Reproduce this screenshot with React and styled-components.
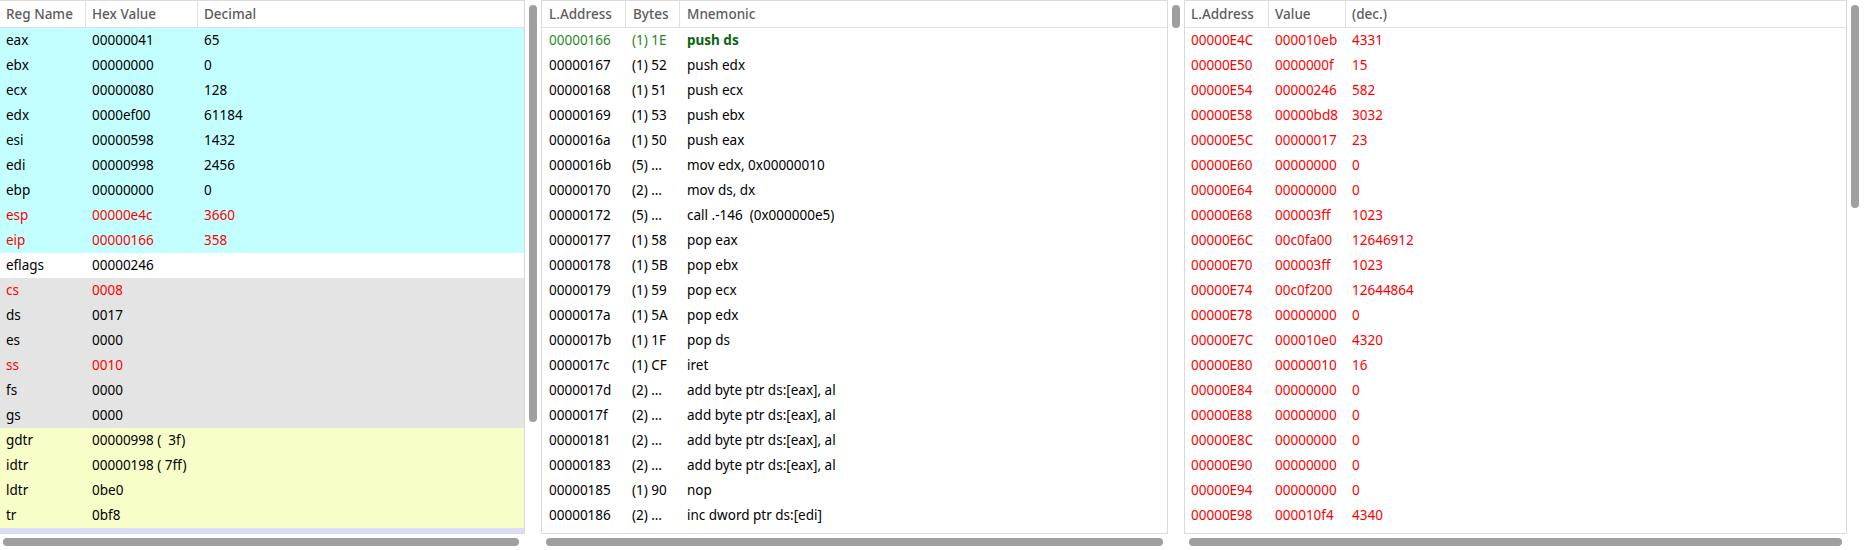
import React from "react";
import styled, { createGlobalStyle } from "styled-components";

const GlobalStyle = createGlobalStyle`
  html, body {
    margin: 0;
    padding: 0;
    background: #ffffff;
    overflow: hidden;
  }
  body {
    font-family: "Noto Sans", "Open Sans", "DejaVu Sans", sans-serif;
    font-size: 13.5px;
    color: #000;
  }
`;

const Layout = styled.div`
  display: flex;
  width: 1865px;
  height: 550px;
`;

const Pane = styled.div`
  display: flex;
  flex-direction: column;
  width: ${props => props.$width}px;
  flex-shrink: 0;
`;

const PaneBody = styled.div`
  display: flex;
  height: 534px;
`;

const Frame = styled.div`
  flex: 1;
  min-width: 0;
  box-sizing: border-box;
  border: 1px solid #dadada;
  border-left: ${props => (props.$first ? "none" : "1px solid #dadada")};
  background: #fff;
  overflow: hidden;
`;

const VGutter = styled.div`
  width: 16px;
  flex-shrink: 0;
  box-sizing: border-box;
  padding: 5px 4px 0;
`;

const VThumb = styled.div`
  width: 8px;
  height: ${props => props.$length}px;
  border-radius: 4px;
  background: #9f9f9f;
`;

const HGutter = styled.div`
  height: 16px;
  box-sizing: border-box;
  padding: 4px ${props => 16 + props.$right}px 0 ${props => props.$left}px;
`;

const HThumb = styled.div`
  height: 8px;
  border-radius: 4px;
  background: #9f9f9f;
`;

const HeaderRow = styled.div`
  display: grid;
  grid-template-columns: ${props => props.$cols};
  height: 26px;
  border-bottom: 1px solid #e0e0e0;
`;

const HeaderCell = styled.div`
  box-sizing: border-box;
  padding-left: ${props => props.$pad}px;
  line-height: 26px;
  color: #5c5c5c;
  font-weight: 500;
  white-space: nowrap;
  border-right: 1px solid #e0e0e0;
  &:last-child {
    border-right: none;
  }
`;

const Row = styled.div`
  display: grid;
  grid-template-columns: ${props => props.$cols};
  height: 25px;
  background: ${props => props.$bg || "transparent"};
  color: ${props => props.$color || "#000"};
`;

const Cell = styled.div`
  box-sizing: border-box;
  padding-left: ${props => props.$pad}px;
  line-height: 25px;
  white-space: pre;
  overflow: hidden;
  font-weight: ${props => (props.$bold ? 700 : 400)};
  color: ${props => props.$color || "inherit"};
`;

const CYAN = "#c4ffff";
const GRAY = "#e4e4e4";
const YELLOW = "#f7fec8";
const LAVENDER = "#dcdcf7";
const RED = "#ff0000";

const registers = [
  ["eax", "00000041", "65", CYAN],
  ["ebx", "00000000", "0", CYAN],
  ["ecx", "00000080", "128", CYAN],
  ["edx", "0000ef00", "61184", CYAN],
  ["esi", "00000598", "1432", CYAN],
  ["edi", "00000998", "2456", CYAN],
  ["ebp", "00000000", "0", CYAN],
  ["esp", "00000e4c", "3660", CYAN, RED],
  ["eip", "00000166", "358", CYAN, RED],
  ["eflags", "00000246", "", "#ffffff"],
  ["cs", "0008", "", GRAY, RED],
  ["ds", "0017", "", GRAY],
  ["es", "0000", "", GRAY],
  ["ss", "0010", "", GRAY, RED],
  ["fs", "0000", "", GRAY],
  ["gs", "0000", "", GRAY],
  ["gdtr", "00000998 (  3f)", "", YELLOW],
  ["idtr", "00000198 ( 7ff)", "", YELLOW],
  ["ldtr", "0be0", "", YELLOW],
  ["tr", "0bf8", "", YELLOW],
  ["", "", "", LAVENDER],
];

const disasm = [
  ["00000166", "(1) 1E", "push ds"],
  ["00000167", "(1) 52", "push edx"],
  ["00000168", "(1) 51", "push ecx"],
  ["00000169", "(1) 53", "push ebx"],
  ["0000016a", "(1) 50", "push eax"],
  ["0000016b", "(5) …", "mov edx, 0x00000010"],
  ["00000170", "(2) …", "mov ds, dx"],
  ["00000172", "(5) …", "call .-146  (0x000000e5)"],
  ["00000177", "(1) 58", "pop eax"],
  ["00000178", "(1) 5B", "pop ebx"],
  ["00000179", "(1) 59", "pop ecx"],
  ["0000017a", "(1) 5A", "pop edx"],
  ["0000017b", "(1) 1F", "pop ds"],
  ["0000017c", "(1) CF", "iret"],
  ["0000017d", "(2) …", "add byte ptr ds:[eax], al"],
  ["0000017f", "(2) …", "add byte ptr ds:[eax], al"],
  ["00000181", "(2) …", "add byte ptr ds:[eax], al"],
  ["00000183", "(2) …", "add byte ptr ds:[eax], al"],
  ["00000185", "(1) 90", "nop"],
  ["00000186", "(2) …", "inc dword ptr ds:[edi]"],
];

const stack = [
  ["00000E4C", "000010eb", "4331"],
  ["00000E50", "0000000f", "15"],
  ["00000E54", "00000246", "582"],
  ["00000E58", "00000bd8", "3032"],
  ["00000E5C", "00000017", "23"],
  ["00000E60", "00000000", "0"],
  ["00000E64", "00000000", "0"],
  ["00000E68", "000003ff", "1023"],
  ["00000E6C", "00c0fa00", "12646912"],
  ["00000E70", "000003ff", "1023"],
  ["00000E74", "00c0f200", "12644864"],
  ["00000E78", "00000000", "0"],
  ["00000E7C", "000010e0", "4320"],
  ["00000E80", "00000010", "16"],
  ["00000E84", "00000000", "0"],
  ["00000E88", "00000000", "0"],
  ["00000E8C", "00000000", "0"],
  ["00000E90", "00000000", "0"],
  ["00000E94", "00000000", "0"],
  ["00000E98", "000010f4", "4340"],
];

const REG_COLS = "86px 112px 1fr";
const DIS_COLS = "84px 54px 1fr";
const STK_COLS = "84px 77px 1fr";

const Header = ({ cols, titles, pad }) => (
  <HeaderRow $cols={cols}>
    {titles.map(t => (
      <HeaderCell key={t} $pad={pad}>
        {t}
      </HeaderCell>
    ))}
  </HeaderRow>
);

const RegisterPane = () => (
  <Pane $width={541}>
    <PaneBody>
      <Frame $first>
        <Header cols={REG_COLS} pad={6} titles={["Reg Name", "Hex Value", "Decimal"]} />
        {registers.map(([name, hex, dec, bg, color], i) => (
          <Row key={i} $cols={REG_COLS} $bg={bg} $color={color}>
            <Cell $pad={6}>{name}</Cell>
            <Cell $pad={6}>{hex}</Cell>
            <Cell $pad={6}>{dec}</Cell>
          </Row>
        ))}
      </Frame>
      <VGutter>
        <VThumb $length={417} />
      </VGutter>
    </PaneBody>
    <HGutter $left={3} $right={6}>
      <HThumb />
    </HGutter>
  </Pane>
);

const DisasmPane = () => (
  <Pane $width={643}>
    <PaneBody>
      <Frame>
        <Header cols={DIS_COLS} pad={7} titles={["L.Address", "Bytes", "Mnemonic"]} />
        {disasm.map(([addr, bytes, mnem], i) => {
          const current = i === 0;
          return (
            <Row key={addr} $cols={DIS_COLS}>
              <Cell $pad={7} $color={current ? "#1f8a1f" : undefined}>
                {addr}
              </Cell>
              <Cell $pad={6} $color={current ? "#1f8a1f" : undefined}>
                {bytes}
              </Cell>
              <Cell $pad={7} $bold={current} $color={current ? "#0b640b" : undefined}>
                {mnem}
              </Cell>
            </Row>
          );
        })}
      </Frame>
      <VGutter>
        <VThumb $length={23} />
      </VGutter>
    </PaneBody>
    <HGutter $left={5} $right={5}>
      <HThumb />
    </HGutter>
  </Pane>
);

const StackPane = () => (
  <Pane $width={679}>
    <PaneBody>
      <Frame>
        <Header cols={STK_COLS} pad={6} titles={["L.Address", "Value", "(dec.)"]} />
        {stack.map(([addr, val, dec]) => (
          <Row key={addr} $cols={STK_COLS} $color={RED}>
            <Cell $pad={6}>{addr}</Cell>
            <Cell $pad={6}>{val}</Cell>
            <Cell $pad={6}>{dec}</Cell>
          </Row>
        ))}
      </Frame>
      <VGutter>
        <VThumb $length={203} />
      </VGutter>
    </PaneBody>
    <HGutter $left={5} $right={5}>
      <HThumb />
    </HGutter>
  </Pane>
);

const App = () => (
  <>
    <GlobalStyle />
    <Layout>
      <RegisterPane />
      <DisasmPane />
      <StackPane />
    </Layout>
  </>
);

export default App;
